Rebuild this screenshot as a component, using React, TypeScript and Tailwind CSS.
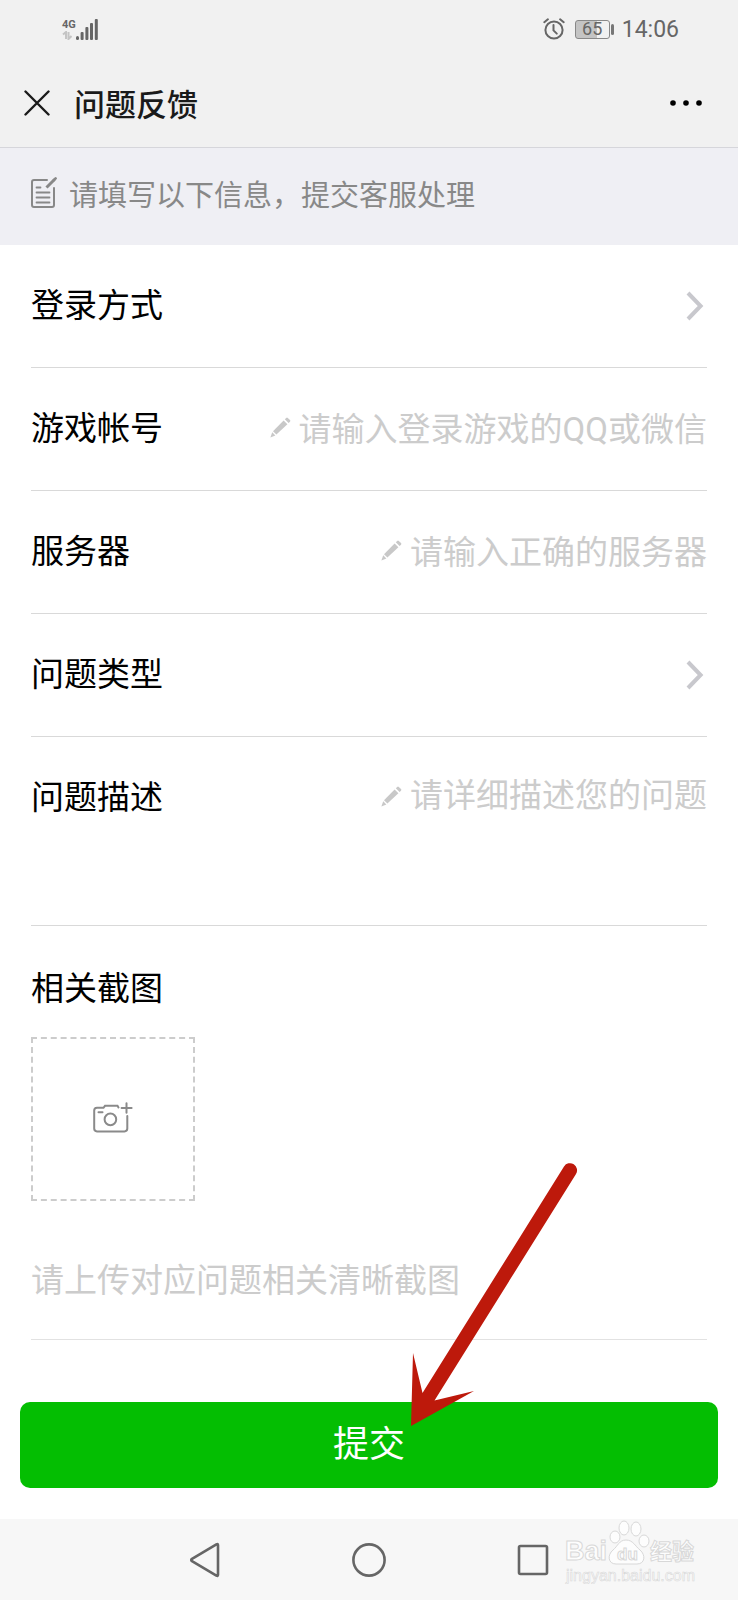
import React, { useState } from "react";

const PencilIcon = () => (
  <svg width="21" height="21" viewBox="0 0 21 21" fill="#c8c8c8" className="shrink-0" aria-hidden="true">
    <path d="M13.6 3.4 17.4 7.2 6.4 17.6 3 14.2Z" />
    <path d="M2.2 15.2 5.4 18.4 0.4 20.6Z" />
    <path d="M14.8 2.2 16.2 0.9Q17 0.2 17.8 0.9L20 3.1Q20.8 3.9 20 4.7L18.6 6Z" />
  </svg>
);

const ChevronIcon = () => (
  <svg width="18" height="30" viewBox="0 0 18 30" fill="none" stroke="#c8c8cd" strokeWidth="4" aria-hidden="true">
    <path d="M2 2 14.6 15 2 28" />
  </svg>
);

const NoteIcon = () => (
  <svg width="26" height="32" viewBox="0 0 26 32" fill="none" stroke="#888" strokeWidth="2" strokeLinecap="round" aria-hidden="true">
    <path d="M16 3H3Q1 3 1 5V28Q1 30 3 30H21Q23 30 23 28V11" />
    <path d="M5.5 10.5H9.5M5.5 15.5H18.5M5.5 20.5H18.5M5.5 25.5H18.5" strokeWidth="1.8" />
    <path d="M15.5 10.5 23.5 2.5" strokeWidth="3" strokeLinecap="butt" />
    <path d="M23 3 24.6 1.4" strokeWidth="2.6" />
  </svg>
);

const CameraIcon = () => (
  <svg width="40" height="32" viewBox="0 0 40 32" fill="none" stroke="#8a8a8a" strokeWidth="2" strokeLinecap="round" aria-hidden="true">
    <path d="M25.5 5.5 24.5 3.8H12L10.5 5.8H4Q1.2 5.8 1.2 8.6V26.6Q1.2 29.4 4 29.4H31.5Q34.3 29.4 34.3 26.6V14" />
    <circle cx="17.4" cy="17.4" r="5.8" />
    <path d="M5.5 10.3H9.5" />
    <path d="M33.5 1.2V10.8M28.6 6H38.6" />
  </svg>
);

const AlarmIcon = () => (
  <svg width="22" height="22" viewBox="0 0 22 22" fill="none" stroke="#666" strokeWidth="2" strokeLinecap="round" aria-hidden="true">
    <circle cx="11" cy="12" r="8.6" />
    <path d="M10.5 7V12.4L13.8 15.6" />
    <path d="M1.3 4.2 4.9 1.3M20.7 4.2 17.1 1.3" />
  </svg>
);

const StatusBar = () => (
  <div className="flex h-[58px] items-center justify-between pl-[62px] pr-[59px] font-['Roboto',sans-serif] text-[#666]">
    <div className="flex items-end">
      <div className="flex flex-col items-start">
        <span className="text-[11px] leading-[12px] font-bold">4G</span>
        <svg width="10" height="9" viewBox="0 0 10 9" fill="none" stroke="#c4c4c4" strokeWidth="2" aria-hidden="true">
          <path d="M1 3.5 4 1V8M6.5 1V8L9.5 5" />
        </svg>
      </div>
      <svg width="23" height="21" viewBox="0 0 23 21" fill="#666" aria-hidden="true">
        <rect x="0" y="17" width="3" height="4" rx="1.5" />
        <rect x="4.6" y="13" width="3" height="8" rx="1" />
        <rect x="9.4" y="8" width="3" height="13" rx="1" />
        <rect x="14" y="4" width="3" height="17" rx="1" />
        <rect x="18.8" y="0" width="3" height="21" rx="1" />
      </svg>
    </div>
    <div className="flex items-center">
      <AlarmIcon />
      <div className="ml-2.5 flex items-center gap-px">
        <div className="flex h-[19px] w-[35px] items-center justify-center rounded-[3px] border border-[#888] bg-linear-to-r from-[#c4c4c4] from-65% to-[#f1f1f1] to-65% text-lg leading-none">
          65
        </div>
        <div className="h-[11px] w-[3px] rounded-xs bg-[#777]" />
      </div>
      <span className="ml-2 text-[23px] leading-none">14:06</span>
    </div>
  </div>
);

const TitleBar = () => (
  <header className="flex h-[90px] items-center border-b border-[#d6d6db] pl-6 pr-[35px]">
    <button type="button" aria-label="关闭">
      <svg width="26" height="26" viewBox="0 0 26 26" stroke="#1a1a1a" strokeWidth="2.4" strokeLinecap="round">
        <path d="M1.5 1.5 24.5 24.5M24.5 1.5 1.5 24.5" />
      </svg>
    </button>
    <h1 className="ml-6 flex-1 text-[31px] leading-none font-medium text-[#1a1a1a]">问题反馈</h1>
    <button type="button" aria-label="更多">
      <svg width="34" height="8" viewBox="0 0 34 8" fill="#000">
        <circle cx="4" cy="4" r="2.8" />
        <circle cx="17" cy="4" r="2.8" />
        <circle cx="30" cy="4" r="2.8" />
      </svg>
    </button>
  </header>
);

const SelectRow = ({ id, label, options }: { id: string; label: string; options: string[] }) => {
  return (
    <div className="flex h-[123px] items-center border-b border-[#d9d9d9] pr-[3px]">
      <label htmlFor={id} className="shrink-0">
        {label}
      </label>
      <select id={id} defaultValue="" className="h-full flex-1 appearance-none bg-transparent px-4 text-right outline-none">
        <option value=""></option>
        {options.map((option) => (
          <option key={option}>{option}</option>
        ))}
      </select>
      <ChevronIcon />
    </div>
  );
};

const InputRow = ({ id, label, placeholder }: { id: string; label: string; placeholder: string }) => {
  return (
    <div className="flex h-[123px] items-center justify-between border-b border-[#d9d9d9]">
      <label htmlFor={id} className="shrink-0">
        {label}
      </label>
      <div className="flex items-center gap-2 pb-1">
        <PencilIcon />
        <input
          id={id}
          type="text"
          placeholder={placeholder}
          className="field-sizing-content text-right outline-none placeholder:text-[#ccc]"
        />
      </div>
    </div>
  );
};

const Arrow = () => (
  <svg
    width="170"
    height="270"
    viewBox="0 0 170 270"
    fill="#bd190b"
    className="pointer-events-none absolute bottom-[87px] left-1/2 ml-10"
    aria-hidden="true"
  >
    <path d="M2 264 4 191 13.5 231 155 4.5A7 7 0 0 1 167 12L25.5 238.5 65 229Z" />
  </svg>
);

const Watermark = () => (
  <svg
    width="140"
    height="66"
    viewBox="0 0 140 66"
    fill="#fdfdfd"
    stroke="#d8d8d8"
    strokeWidth="1"
    className="pointer-events-none absolute right-[38px] bottom-4"
    aria-hidden="true"
  >
    <g fontFamily="Liberation Sans, sans-serif" fontWeight="bold">
      <text x="5" y="42" fontSize="27">
        Bai
      </text>
      <path d="M66 22C73 22 75 28 80 32 86 37 85 46 77 46H56C48 46 47 37 53 32 58 28 59 22 66 22Z" />
      <ellipse cx="55" cy="19" rx="5" ry="6" />
      <ellipse cx="64" cy="10" rx="5" ry="7" />
      <ellipse cx="76" cy="11" rx="5" ry="7" />
      <ellipse cx="84" cy="23" rx="5" ry="6" />
      <text x="57" y="42" fontSize="17">
        du
      </text>
    </g>
    <text x="90" y="41" fontSize="22" fontWeight="bold" fontFamily="Noto Sans CJK SC, sans-serif">
      经验
    </text>
    <text x="6" y="63" fontSize="16" fontFamily="Liberation Sans, sans-serif" strokeWidth="0.6">
      jingyan.baidu.com
    </text>
  </svg>
);

const NavBar = () => (
  <nav className="relative flex h-[81px] items-center justify-center bg-[#f7f7f7]">
    <button type="button" aria-label="返回" className="flex w-[164px] justify-center">
      <svg width="36" height="36" viewBox="0 0 36 36" fill="none" stroke="#666" strokeWidth="2.6" strokeLinejoin="round">
        <path d="M31 3.2V32.8Q31 34.4 29.4 33.6L5 19.2Q3.4 18 5 16.8L29.4 2.4Q31 1.6 31 3.2Z" />
      </svg>
    </button>
    <button type="button" aria-label="主页" className="flex w-[164px] justify-center">
      <svg width="36" height="36" viewBox="0 0 36 36" fill="none" stroke="#666" strokeWidth="2.6">
        <circle cx="18" cy="18" r="15.6" />
      </svg>
    </button>
    <button type="button" aria-label="最近任务" className="flex w-[164px] justify-center">
      <svg width="36" height="36" viewBox="0 0 36 36" fill="none" stroke="#666" strokeWidth="2.6">
        <rect x="4" y="4" width="28" height="28" rx="1.5" />
      </svg>
    </button>
    <Watermark />
  </nav>
);

const App = () => {
  const [fileName, setFileName] = useState("");

  return (
    <div className="min-h-screen bg-white font-['Roboto','Noto_Sans_CJK_SC',sans-serif] text-black">
      <div className="bg-[#f1f1f1] font-['Noto_Sans_CJK_SC',sans-serif]">
        <StatusBar />
        <TitleBar />
      </div>

      <div className="flex h-[97px] items-center gap-3 bg-[#efeff4] px-[31px] text-[29px] leading-none text-[#888]">
        <div className="pb-2">
          <NoteIcon />
        </div>
        <p>请填写以下信息，提交客服处理</p>
      </div>

      <form onSubmit={(e) => e.preventDefault()}>
        <div className="px-[31px] text-[33px] leading-[48px]">
          <SelectRow id="login" label="登录方式" options={["QQ", "微信"]} />
          <InputRow id="account" label="游戏帐号" placeholder="请输入登录游戏的QQ或微信" />
          <InputRow id="server" label="服务器" placeholder="请输入正确的服务器" />
          <SelectRow id="type" label="问题类型" options={["登录", "充值", "其他"]} />

          <div className="flex h-[189px] items-start justify-between border-b border-[#d9d9d9] pt-[37px]">
            <label htmlFor="detail" className="shrink-0">
              问题描述
            </label>
            <div className="flex items-start gap-2">
              <div className="flex h-11 items-center">
                <PencilIcon />
              </div>
              <textarea
                id="detail"
                rows={2}
                placeholder="请详细描述您的问题"
                className="field-sizing-content resize-none text-right leading-[44px] outline-none placeholder:text-[#ccc]"
              />
            </div>
          </div>

          <div className="border-b border-[#e2e2e2] pt-[39px] pb-[34px]">
            <h2>相关截图</h2>
            <label
              htmlFor="shot"
              className="mt-6 flex size-[164px] cursor-pointer items-center justify-center border-2 border-dashed border-[#ccc] pb-0.5"
            >
              <span className="sr-only">{fileName}</span>
              <CameraIcon />
              <input
                id="shot"
                type="file"
                accept="image/*"
                aria-label="相关截图"
                className="sr-only"
                onChange={(e) => setFileName(e.target.files?.[0]?.name ?? "")}
              />
            </label>
            <p className="mt-14 text-[#ccc]">请上传对应问题相关清晰截图</p>
          </div>
        </div>

        <div className="relative px-5 pt-[62px] pb-[31px]">
          <button type="submit" className="h-[86px] w-full rounded-[10px] bg-[#04be02] text-4xl text-white">
            提交
          </button>
          <Arrow />
        </div>
      </form>

      <NavBar />
    </div>
  );
};

export default App;
